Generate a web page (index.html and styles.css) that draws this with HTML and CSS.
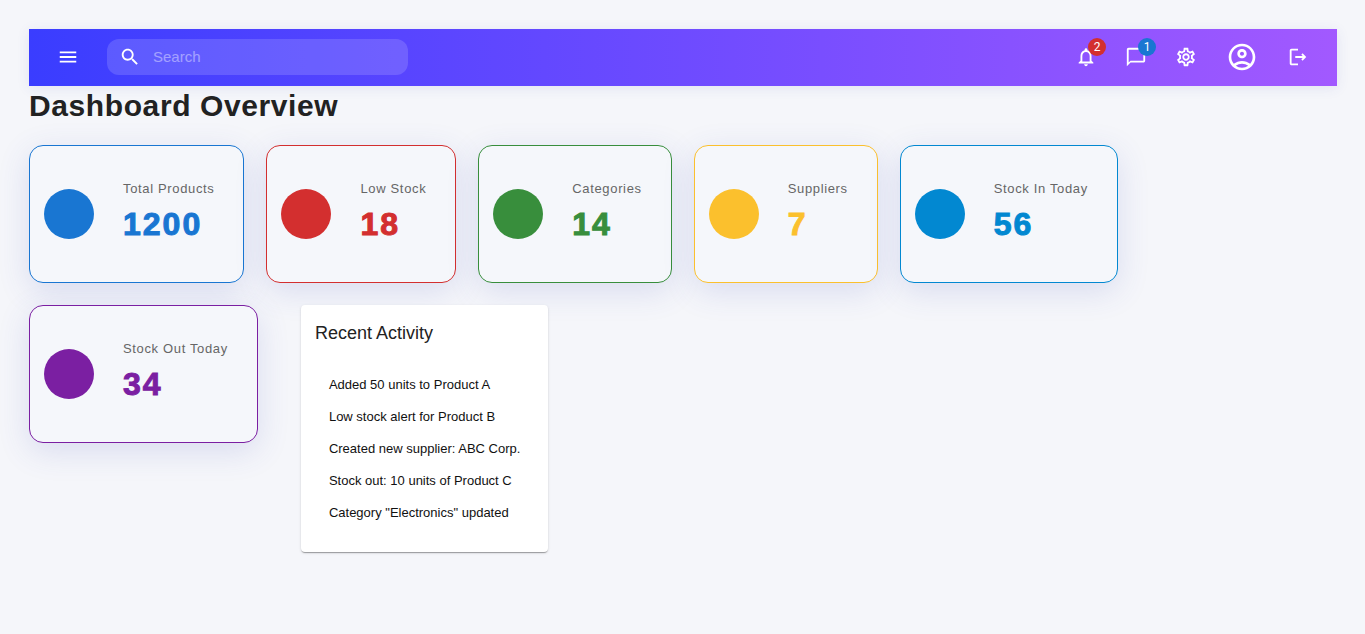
FILE: index.html
```html
<!DOCTYPE html>
<html lang="en">
<head>
<meta charset="utf-8">
<meta name="viewport" content="width=device-width, initial-scale=1">
<title>Dashboard Overview</title>
<link rel="stylesheet" href="styles.css">
</head>
<body>
<header class="topbar">
  <button class="icon-btn" type="button" aria-label="Open menu">
    <svg class="icon" viewBox="0 0 24 24"><path d="M3 18h18v-2H3v2zm0-5h18v-2H3v2zm0-7v2h18V6H3z"/></svg>
  </button>
  <label class="search">
    <svg class="icon" viewBox="0 0 24 24" aria-hidden="true"><path d="M15.5 14h-.79l-.28-.27C15.41 12.59 16 11.11 16 9.5 16 5.91 13.09 3 9.5 3S3 5.91 3 9.5 5.91 16 9.5 16c1.61 0 3.09-.59 4.23-1.57l.27.28v.79l5 4.99L20.49 19l-4.99-5zm-6 0C7.01 14 5 11.99 5 9.5S7.01 5 9.5 5 14 7.01 14 9.5 11.99 14 9.5 14z"/></svg>
    <input class="search-input" type="search" placeholder="Search" aria-label="Search">
  </label>
  <nav class="actions" aria-label="Account">
    <button class="icon-btn" type="button" aria-label="Notifications, 2 new">
      <svg class="icon" viewBox="0 0 24 24"><path d="M12 22c1.1 0 2-.9 2-2h-4c0 1.1.9 2 2 2zm6-6v-5c0-3.07-1.63-5.64-4.5-6.32V4c0-.83-.67-1.5-1.5-1.5s-1.5.67-1.5 1.5v.68C7.64 5.36 6 7.92 6 11v5l-2 2v1h16v-1l-2-2zm-2 1H8v-6c0-2.48 1.51-4.5 4-4.5s4 2.02 4 4.5v6z"/></svg>
      <span class="badge badge-red">2</span>
    </button>
    <button class="icon-btn" type="button" aria-label="Messages, 1 new">
      <svg class="icon" viewBox="0 0 24 24"><path d="M20 2H4c-1.1 0-2 .9-2 2v18l4-4h14c1.1 0 2-.9 2-2V4c0-1.1-.9-2-2-2zm0 14H6l-2 2V4h16v12z"/></svg>
      <span class="badge badge-blue">1</span>
    </button>
    <button class="icon-btn" type="button" aria-label="Settings">
      <svg class="icon" viewBox="0 0 24 24"><path d="M19.43 12.98c.04-.32.07-.64.07-.98 0-.34-.03-.66-.07-.98l2.11-1.65c.19-.15.24-.42.12-.64l-2-3.46c-.09-.16-.26-.25-.44-.25-.06 0-.12.01-.17.03l-2.49 1c-.52-.4-1.08-.73-1.69-.98l-.38-2.65C14.46 2.18 14.25 2 14 2h-4c-.25 0-.46.18-.49.42l-.38 2.65c-.61.25-1.17.59-1.69.98l-2.49-1c-.06-.02-.12-.03-.18-.03-.17 0-.34.09-.43.25l-2 3.46c-.13.22-.07.49.12.64l2.11 1.65c-.04.32-.07.65-.07.98 0 .33.03.66.07.98l-2.11 1.65c-.19.15-.24.42-.12.64l2 3.46c.09.16.26.25.44.25.06 0 .12-.01.17-.03l2.49-1c.52.4 1.08.73 1.69.98l.38 2.65c.03.24.24.42.49.42h4c.25 0 .46-.18.49-.42l.38-2.65c.61-.25 1.17-.59 1.69-.98l2.49 1c.06.02.12.03.18.03.17 0 .34-.09.43-.25l2-3.46c.12-.22.07-.49-.12-.64l-2.11-1.65zm-1.98-1.71c.04.31.05.52.05.73 0 .21-.02.43-.05.73l-.14 1.13.89.7 1.08.84-.7 1.21-1.27-.51-1.04-.42-.9.68c-.43.32-.84.56-1.25.73l-1.06.43-.16 1.13-.2 1.35h-1.4l-.19-1.35-.16-1.13-1.06-.43c-.43-.18-.83-.41-1.23-.71l-.91-.7-1.06.43-1.27.51-.7-1.21 1.08-.84.89-.7-.14-1.13c-.03-.31-.05-.54-.05-.74s.02-.43.05-.73l.14-1.13-.89-.7-1.08-.84.7-1.21 1.27.51 1.04.42.9-.68c.43-.32.84-.56 1.25-.73l1.06-.43.16-1.13.2-1.35h1.39l.19 1.35.16 1.13 1.06.43c.43.18.83.41 1.23.71l.91.7 1.06-.43 1.27-.51.7 1.21-1.07.85-.89.7.14 1.13zM12 8c-2.21 0-4 1.79-4 4s1.79 4 4 4 4-1.79 4-4-1.79-4-4-4zm0 6c-1.1 0-2-.9-2-2s.9-2 2-2 2 .9 2 2-.9 2-2 2z"/></svg>
    </button>
    <button class="icon-btn profile-btn" type="button" aria-label="Profile">
      <svg class="icon icon-large" viewBox="0 0 24 24"><path d="M12 2C6.48 2 2 6.48 2 12s4.48 10 10 10 10-4.48 10-10S17.52 2 12 2zM7.35 18.5C8.66 17.56 10.26 17 12 17s3.34.56 4.65 1.5C15.34 19.44 13.74 20 12 20s-3.34-.56-4.65-1.5zm10.79-1.38C16.45 15.8 14.32 15 12 15s-4.45.8-6.14 2.12C4.7 15.73 4 13.95 4 12c0-4.42 3.58-8 8-8s8 3.58 8 8c0 1.95-.7 3.73-1.86 5.12zM12 6c-1.93 0-3.5 1.57-3.5 3.5S10.07 13 12 13s3.5-1.57 3.5-3.5S13.93 6 12 6zm0 5c-.83 0-1.5-.67-1.5-1.5S11.17 8 12 8s1.5.67 1.5 1.5S12.83 11 12 11z"/></svg>
    </button>
    <button class="icon-btn" type="button" aria-label="Log out">
      <svg class="icon" viewBox="0 0 24 24"><path d="M17 8l-1.41 1.41L17.17 11H9v2h8.17l-1.58 1.58L17 16l4-4-4-4zM5 5h7V3H5c-1.1 0-2 .9-2 2v14c0 1.1.9 2 2 2h7v-2H5V5z"/></svg>
    </button>
  </nav>
</header>
<main>
  <h1 class="page-title">Dashboard Overview</h1>
  <div class="cards">
    <section class="stat blue"><span class="dot"></span><div class="stat-text"><h2 class="stat-label">Total Products</h2><p class="stat-value">1200</p></div></section>
    <section class="stat red"><span class="dot"></span><div class="stat-text"><h2 class="stat-label">Low Stock</h2><p class="stat-value">18</p></div></section>
    <section class="stat green"><span class="dot"></span><div class="stat-text"><h2 class="stat-label">Categories</h2><p class="stat-value">14</p></div></section>
    <section class="stat yellow"><span class="dot"></span><div class="stat-text"><h2 class="stat-label">Suppliers</h2><p class="stat-value">7</p></div></section>
    <section class="stat sky"><span class="dot"></span><div class="stat-text"><h2 class="stat-label">Stock In Today</h2><p class="stat-value">56</p></div></section>
    <section class="stat purple"><span class="dot"></span><div class="stat-text"><h2 class="stat-label">Stock Out Today</h2><p class="stat-value">34</p></div></section>
    <section class="activity">
      <h2 class="activity-title">Recent Activity</h2>
      <ul class="activity-list">
        <li>Added 50 units to Product A</li>
        <li>Low stock alert for Product B</li>
        <li>Created new supplier: ABC Corp.</li>
        <li>Stock out: 10 units of Product C</li>
        <li>Category "Electronics" updated</li>
      </ul>
    </section>
  </div>
</main>
</body>
</html>
```
FILE: styles.css
```css
* { box-sizing: border-box; }

body {
  margin: 0;
  padding: 29px 28px 29px 29px;
  background: #f5f6fa;
  color: #222;
  font-family: "Liberation Sans", Arial, sans-serif;
}

h1, h2, p, ul { margin: 0; padding: 0; }

.topbar {
  display: flex;
  align-items: center;
  justify-content: space-between;
  padding: 10px 21px 11px;
  background: linear-gradient(90deg, #3a3dff, #a259ff);
  box-shadow: 0 2px 12px rgba(60, 72, 180, 0.1);
}

.icon-btn {
  position: relative;
  display: flex;
  padding: 7px;
  border: 0;
  background: none;
  color: #fff;
}

.profile-btn { padding: 2px 8px; }

.icon {
  display: block;
  flex-shrink: 0;
  width: 22px;
  height: 22px;
  fill: #fff;
}

.icon-large { width: 32px; height: 32px; }

.search {
  display: flex;
  align-items: center;
  gap: 12px;
  width: 301px;
  height: 36px;
  margin: 0 auto 0 21px;
  padding: 0 12px;
  border-radius: 12px;
  background: rgba(255, 255, 255, 0.15);
}

.search-input {
  flex: 1;
  min-width: 0;
  padding: 0;
  border: 0;
  outline: 0;
  background: none;
  color: #fff;
  font: 15px/20px "Liberation Sans", Arial, sans-serif;
}

.search-input::placeholder { color: #fff; opacity: 0.42; }

.actions {
  display: flex;
  align-items: center;
  gap: 14px;
}

.badge {
  position: absolute;
  top: -1px;
  right: -2px;
  width: 18px;
  height: 18px;
  border-radius: 50%;
  color: #fff;
  font: 400 12px/18px Roboto, sans-serif;
  text-align: center;
}

.badge-red { background: #d32f2f; }
.badge-blue { background: #1976d2; }

.page-title {
  font-size: 30px;
  line-height: 40px;
  letter-spacing: 0.02em;
}

.cards {
  display: flex;
  flex-wrap: wrap;
  align-items: flex-start;
  gap: 22px;
  margin-top: 19px;
}

.stat {
  display: flex;
  align-items: center;
  gap: 29px;
  min-height: 138px;
  padding: 0 29px 0 14px;
  border: 1px solid currentColor;
  border-radius: 14px;
  background: #f5f7fb;
  box-shadow: 0 8px 32px rgba(60, 72, 180, 0.15);
}

.dot {
  width: 50px;
  height: 50px;
  border-radius: 50%;
  background: currentColor;
}

.stat-label {
  color: #666;
  font-size: 13px;
  font-weight: 400;
  line-height: 20px;
  letter-spacing: 0.05em;
}

.stat-value {
  font-size: 32px;
  font-weight: 900;
  line-height: 50px;
  letter-spacing: 2px;
  -webkit-text-stroke: 1px currentColor;
}

.blue { color: #1976d2; }
.red { color: #d32f2f; }
.green { color: #388e3c; }
.yellow { color: #fbc02d; }
.sky { color: #0288d1; }
.purple { color: #7b1fa2; }

.activity {
  margin-left: 21px;
  padding: 14px;
  border-radius: 4px;
  background: #fff;
  box-shadow: 0 2px 1px -1px rgba(0, 0, 0, 0.2), 0 1px 1px rgba(0, 0, 0, 0.14), 0 1px 3px rgba(0, 0, 0, 0.12);
}

.activity-title {
  font-size: 18px;
  font-weight: 400;
  line-height: 28px;
}

.activity-list {
  padding: 22px 14px 9px;
  color: #111;
  font-size: 13px;
  line-height: 32px;
  list-style: none;
}
```
